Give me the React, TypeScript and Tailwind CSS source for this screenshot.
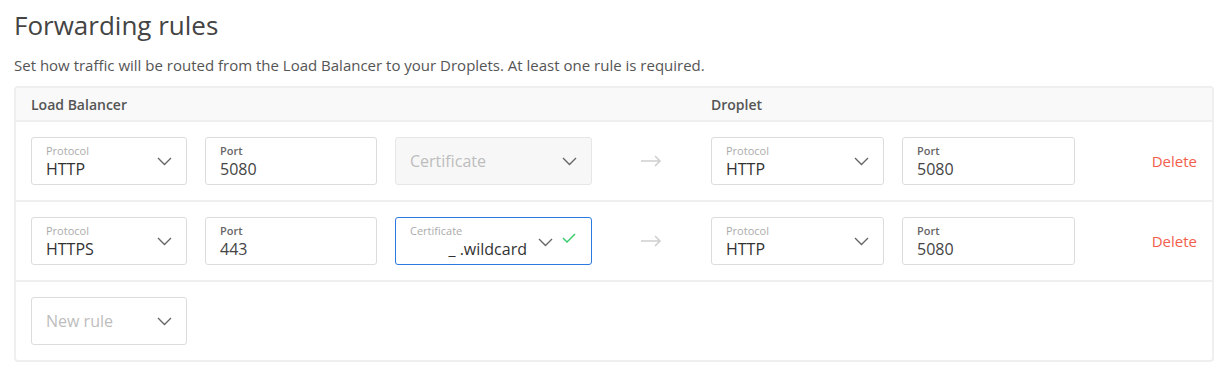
import React from "react";

const font = { fontFamily: "'Open Sans', 'Liberation Sans', sans-serif" };

function Chevron() {
  return (
    <svg width="15" height="9" viewBox="0 0 15 9" fill="none">
      <path d="M1 1l6.5 6.5L14 1" stroke="#666" strokeWidth="1.4" />
    </svg>
  );
}

function Check() {
  return (
    <svg width="14" height="10" viewBox="0 0 14 10" fill="none">
      <path d="M1 5l4 4 8-8" stroke="#3dcc6f" strokeWidth="1.5" />
    </svg>
  );
}

function Arrow() {
  return (
    <svg width="21" height="12" viewBox="0 0 21 12" fill="none">
      <path d="M0 6h19M14 1l5 5-5 5" stroke="#cfcfcf" strokeWidth="1.6" />
    </svg>
  );
}

function SelectBox({ label, value }: { label: string; value: string }) {
  return (
    <div className="h-[48px] border border-[#dcdcdc] rounded-[3px] bg-white flex items-center justify-between pl-[14px] pr-[14px]">
      <div className="flex flex-col">
        <span className="text-[11px] leading-[13px] text-[#ababab]">{label}</span>
        <span className="text-[16px] leading-[20px] text-[#333] mt-[2px]">{value}</span>
      </div>
      <Chevron />
    </div>
  );
}

function PortBox({ value }: { value: string }) {
  return (
    <div className="h-[48px] border border-[#dcdcdc] rounded-[3px] bg-white flex flex-col justify-center pl-[14px]">
      <span className="text-[11px] leading-[13px] font-semibold text-[#666]">Port</span>
      <span className="text-[16px] leading-[20px] text-[#444] mt-[2px]">{value}</span>
    </div>
  );
}

function Row({ children }: { children: React.ReactNode }) {
  return (
    <div className="grid grid-cols-[156px_172px_197px_83px_173px_173px_1fr] gap-x-[18px] items-center px-[15px] py-[15px] border-b-2 border-[#efefef]">
      {children}
    </div>
  );
}

function Delete() {
  return <span className="justify-self-end text-[15px] text-[#f0604d]">Delete</span>;
}

export default function App() {
  return (
    <div className="w-[1226px] h-[392px] bg-white pl-[14px] pr-[12px] pt-[8px]" style={font}>
      <h1 className="text-[26px] leading-[34px] font-normal text-[#444]">Forwarding rules</h1>
      <p className="mt-[14px] text-[15px] leading-[18px] text-[#555]">
        Set how traffic will be routed from the Load Balancer to your Droplets. At least one rule is required.
      </p>
      <div className="mt-[12px] border-2 border-[#efefef] rounded-[4px] overflow-hidden">
        <div className="grid grid-cols-[156px_172px_197px_83px_173px_173px_1fr] gap-x-[18px] items-center h-[34px] px-[15px] bg-[#f9f9f9] border-b-2 border-[#efefef] text-[14px] font-semibold text-[#555]">
          <span className="col-span-4">Load Balancer</span>
          <span>Droplet</span>
        </div>

        <Row>
          <SelectBox label="Protocol" value="HTTP" />
          <PortBox value="5080" />
          <div className="h-[48px] border border-[#e6e6e6] rounded-[3px] bg-[#f7f7f7] flex items-center justify-between pl-[14px] pr-[14px]">
            <span className="text-[16px] text-[#bdbdbd]">Certificate</span>
            <Chevron />
          </div>
          <div className="flex justify-center">
            <Arrow />
          </div>
          <SelectBox label="Protocol" value="HTTP" />
          <PortBox value="5080" />
          <Delete />
        </Row>

        <Row>
          <SelectBox label="Protocol" value="HTTPS" />
          <PortBox value="443" />
          <div className="h-[48px] border border-[#2a7ae2] rounded-[3px] bg-white flex items-center pl-[14px] pr-[15px]">
            <div className="flex-1 min-w-0 flex flex-col">
              <span className="text-[11px] leading-[13px] text-[#ababab]">Certificate</span>
              <span className="text-[16px] leading-[20px] text-[#333] mt-[2px] text-right whitespace-nowrap">_ .wildcard</span>
            </div>
            <div className="ml-[11px] pt-[2px]">
              <Chevron />
            </div>
            <div className="ml-[9px] pb-[6px]">
              <Check />
            </div>
          </div>
          <div className="flex justify-center">
            <Arrow />
          </div>
          <SelectBox label="Protocol" value="HTTP" />
          <PortBox value="5080" />
          <Delete />
        </Row>

        <div className="px-[15px] pt-[15px] pb-[15px]">
          <div className="w-[156px] h-[48px] border border-[#dcdcdc] rounded-[3px] bg-white flex items-center justify-between pl-[14px] pr-[14px]">
            <span className="text-[16px] text-[#bdbdbd]">New rule</span>
            <Chevron />
          </div>
        </div>
      </div>
    </div>
  );
}
